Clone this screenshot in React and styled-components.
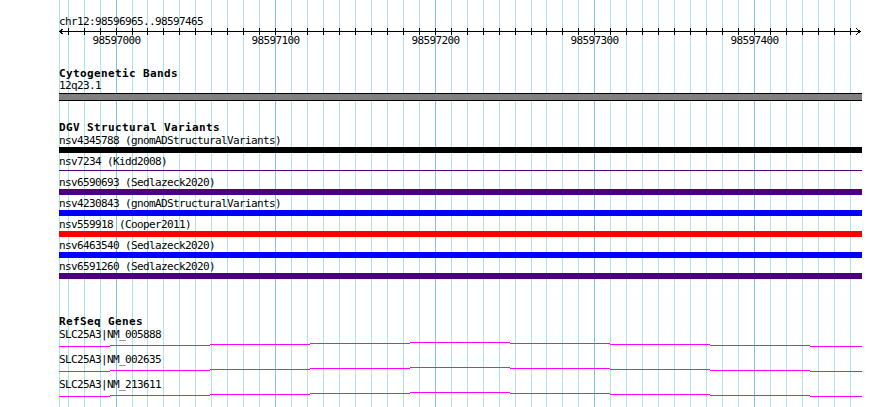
import styled, { createGlobalStyle } from 'styled-components';

const START = 98596965;
const LEFT = 59;
const WIDTH = 803;
const SCALE = 1.596;

const toX = (pos) => Math.round(LEFT + 0.7 + (pos - START) * SCALE);

const gridLines = [{ x: LEFT, major: false }];
for (let k = 0; k < 50; k++) {
    const pos = START + 5 + k * 10;
    gridLines.push({ x: toX(pos), major: pos % 100 === 0, pos });
}

const variants = [
    { name: 'nsv4345788', study: 'gnomADStructuralVariants', color: '#000000' },
    { name: 'nsv7234', study: 'Kidd2008', color: '#4b0082', thin: true },
    { name: 'nsv6590693', study: 'Sedlazeck2020', color: '#4b0082' },
    { name: 'nsv4230843', study: 'gnomADStructuralVariants', color: '#0000ff' },
    { name: 'nsv559918', study: 'Cooper2011', color: '#ff0000' },
    { name: 'nsv6463540', study: 'Sedlazeck2020', color: '#0000ff' },
    { name: 'nsv6591260', study: 'Sedlazeck2020', color: '#4b0082' },
];

const genes = ['SLC25A3|NM_005888', 'SLC25A3|NM_002635', 'SLC25A3|NM_213611'];

// intron line: shallow hat, 1px steps every ~100px
const hatPath = (() => {
    const steps = [
        [0, 51, 5], [51, 151, 4], [151, 251, 3], [251, 351, 2], [351, 451, 1],
        [451, 551, 2], [551, 651, 3], [651, 751, 4], [751, 803, 5],
    ];
    return steps.map(([a, b, y]) => `M${a} ${y + 0.5}H${b}`).join('');
})();

function App() {
    return (
        <Browser>
            <GlobalStyle />
            <Grid width="890" height="407">
                {gridLines.map((g, i) => (
                    <rect key={i} x={g.x} y="0" width="1" height="407" fill={g.major ? '#7ec4e4' : '#a6e8ee'} />
                ))}
            </Grid>

            <Tracks>
                <Ruler>
                    <Label>chr12:98596965..98597465</Label>
                    <Axis width={WIDTH} height="7">
                        <path d={`M0 3.5H${WIDTH - 1}`} stroke="#000" />
                        <path d="M4.5 0.5L0.5 3.5L4.5 6.5" stroke="#000" fill="none" />
                        <path d={`M${WIDTH - 6} 0.5L${WIDTH - 1.5} 3.5L${WIDTH - 6} 6.5`} stroke="#000" fill="none" />
                        {gridLines.slice(1).map((g, i) => (
                            <rect key={i} x={g.x - LEFT} y="0" width="1" height="7" fill="#000" />
                        ))}
                    </Axis>
                    <TickLabels>
                        {gridLines.filter((g) => g.major).map((g) => (
                            <TickLabel key={g.pos} style={{ left: g.x - LEFT + 0.5 }}>{g.pos}</TickLabel>
                        ))}
                    </TickLabels>
                </Ruler>

                <Track $top={21}>
                    <Heading $mb={0}>Cytogenetic Bands</Heading>
                    <Label>12q23.1</Label>
                    <Band />
                </Track>

                <Track $top={21}>
                    <Heading>DGV Structural Variants</Heading>
                    {variants.map((v) => (
                        <Row key={v.name}>
                            <Label>{v.name} ({v.study})</Label>
                            <BarSlot>
                                <Bar $color={v.color} $thin={v.thin} />
                            </BarSlot>
                        </Row>
                    ))}
                </Track>

                <Track $top={34}>
                    <Heading>RefSeq Genes</Heading>
                    {genes.map((g) => (
                        <Row key={g}>
                            <Label>{g}</Label>
                            <GeneGlyph width={WIDTH} height="13">
                                <path d={hatPath} stroke="#ff00ff" fill="none" />
                            </GeneGlyph>
                        </Row>
                    ))}
                </Track>
            </Tracks>
        </Browser>
    );
}

const GlobalStyle = createGlobalStyle`
    html, body {
        margin: 0;
        padding: 0;
        background: #ffffff;
    }
`;

const Browser = styled.div`
    position: relative;
    width: 890px;
    height: 407px;
    overflow: hidden;
    background: #ffffff;
    font-family: "DejaVu Sans Mono", monospace;
    color: #000000;
`;

const Grid = styled.svg`
    position: absolute;
    top: 0;
    left: 0;
    shape-rendering: crispEdges;
`;

const Tracks = styled.div`
    position: relative;
    display: flex;
    flex-direction: column;
    width: ${WIDTH}px;
    padding: 16px 0 0 ${LEFT}px;
`;

const Ruler = styled.div`
    display: flex;
    flex-direction: column;
`;

const Axis = styled.svg`
    display: block;
    shape-rendering: crispEdges;
`;

const TickLabels = styled.div`
    position: relative;
    height: 12px;
`;

const TickLabel = styled.span`
    position: absolute;
    top: 0;
    transform: translateX(-50%);
    font-size: 11px;
    line-height: 12px;
    letter-spacing: -0.62px;
    white-space: nowrap;
`;

const Track = styled.div`
    display: flex;
    flex-direction: column;
    margin-top: ${(p) => p.$top}px;
`;

const Heading = styled.div`
    font-size: 11px;
    font-weight: 700;
    line-height: 12px;
    height: 12px;
    letter-spacing: 0.38px;
    white-space: nowrap;
    margin-bottom: ${(p) => (p.$mb ?? 1)}px;
`;

const Label = styled.div`
    font-size: 11px;
    line-height: 12px;
    height: 12px;
    letter-spacing: -0.62px;
    white-space: nowrap;
`;

const Band = styled.div`
    margin-top: 1px;
    height: 6px;
    border-top: 1px solid #000000;
    border-bottom: 1px solid #000000;
    background: #808080;
`;

const Row = styled.div`
    display: flex;
    flex-direction: column;
`;

const BarSlot = styled.div`
    display: flex;
    align-items: flex-start;
    height: 6px;
    margin-bottom: 3px;
`;

const Bar = styled.div`
    width: 100%;
    height: ${(p) => (p.$thin ? 1 : 6)}px;
    margin-top: ${(p) => (p.$thin ? 2 : 0)}px;
    background: ${(p) => p.$color};
`;

const GeneGlyph = styled.svg`
    display: block;
    shape-rendering: crispEdges;
`;

export default App;
